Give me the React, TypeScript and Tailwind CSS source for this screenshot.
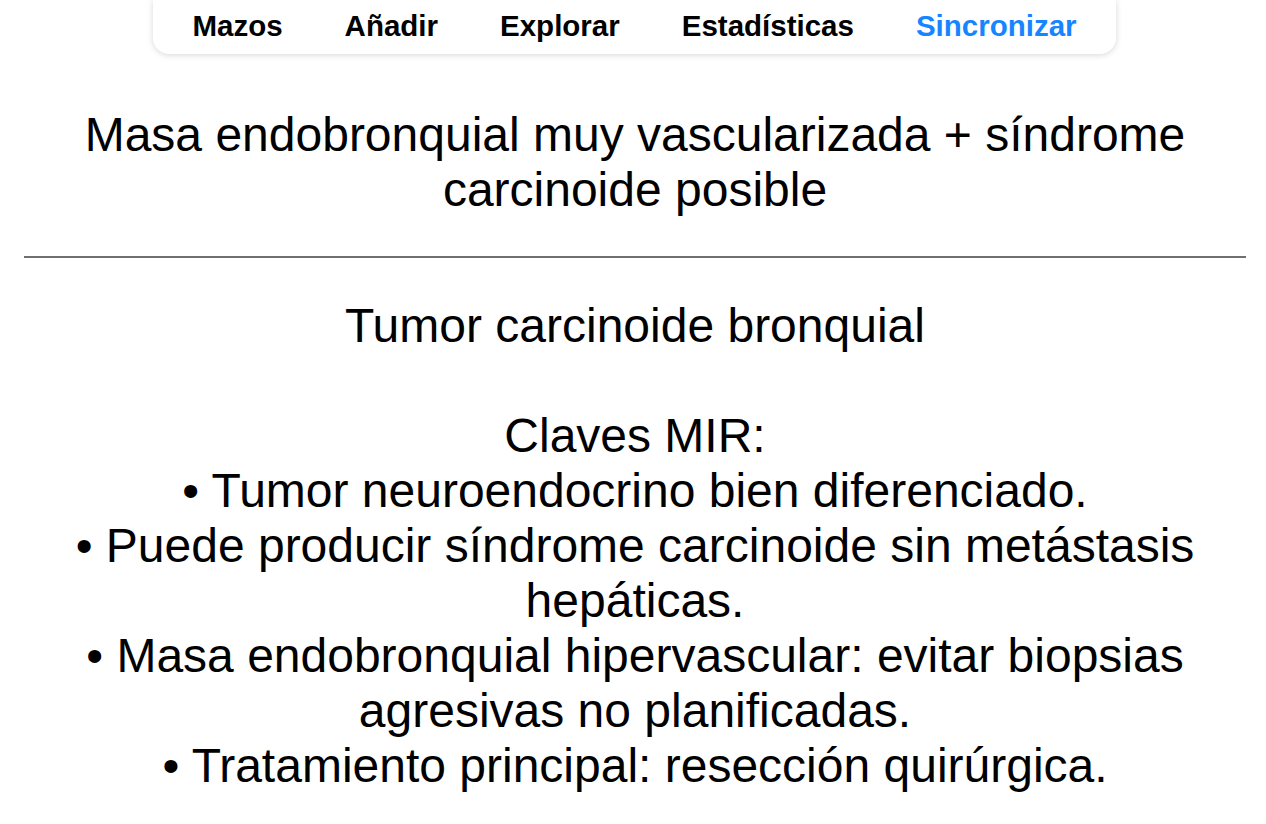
import React from "react";

const navItems = ["Mazos", "Añadir", "Explorar", "Estadísticas", "Sincronizar"];

export default function App() {
  return (
    <div
      className="min-h-[824px] bg-white text-black"
      style={{ fontFamily: '"Liberation Sans", Arial, Helvetica, sans-serif' }}
    >
      <div className="flex justify-center pl-[3px]">
        <nav className="flex h-[54px] items-start gap-[62px] rounded-b-[16px] bg-white px-[39px] pt-[9px] shadow-[0_1px_6px_rgba(0,0,0,0.16)]">
          {navItems.map((item) => (
            <span
              key={item}
              className={
                item === "Sincronizar"
                  ? "text-[29.5px] font-bold leading-[33px] text-[#1685ff]"
                  : "text-[29.5px] font-bold leading-[33px] text-black"
              }
            >
              {item}
            </span>
          ))}
        </nav>
      </div>

      <div className="ml-[24px] mr-[20px] text-center text-[48px] leading-[55px]">
        <div className="mt-[53px]">
          Masa endobronquial muy vascularizada + síndrome carcinoide posible
        </div>
        <div className="mt-[39px] mb-[40px] h-[2px] bg-[#707070]" />
        <div>
          Tumor carcinoide bronquial
          <br />
          <br />
          Claves MIR:
          <br />• Tumor neuroendocrino bien diferenciado.
          <br />• Puede producir síndrome carcinoide sin metástasis hepáticas.
          <br />• Masa endobronquial hipervascular: evitar biopsias agresivas no planificadas.
          <br />• Tratamiento principal: resección quirúrgica.
        </div>
      </div>
    </div>
  );
}
